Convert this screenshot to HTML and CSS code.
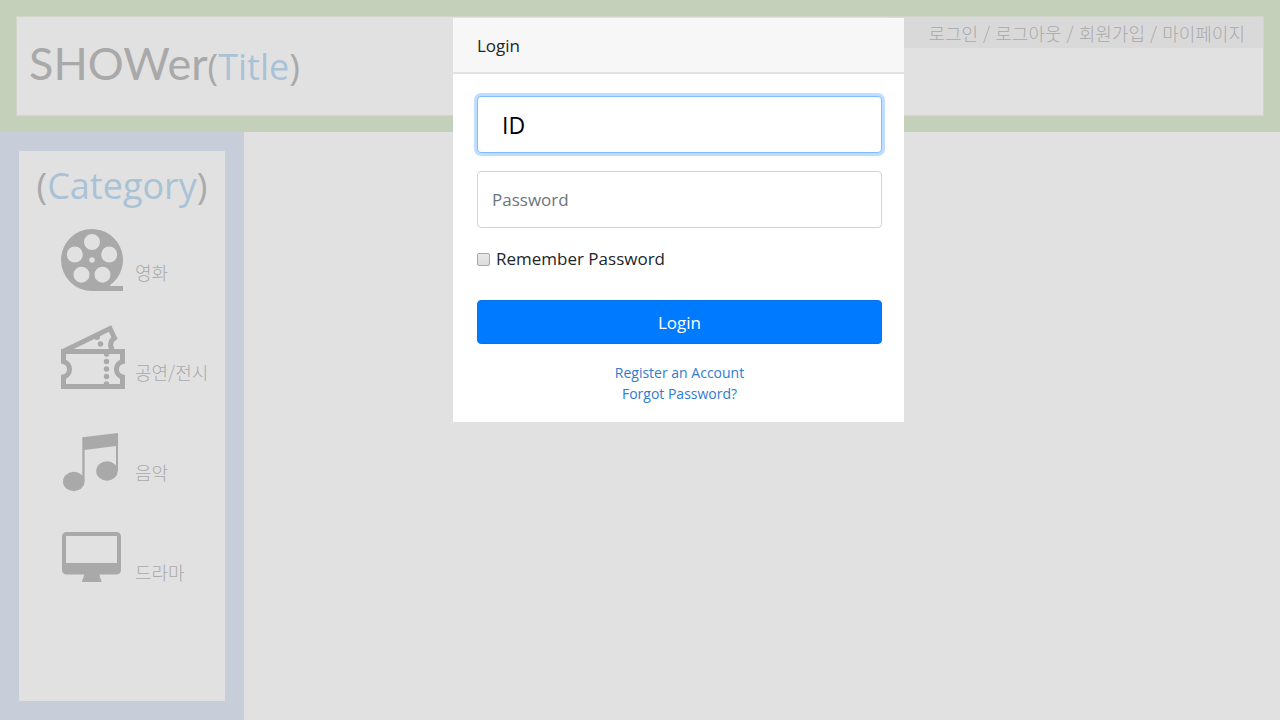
FILE: index.html
```html
<!DOCTYPE html>
<html lang="ko">
<head>
<meta charset="utf-8">
<meta name="viewport" content="width=device-width, initial-scale=1">
<title>SHOWer</title>
<link rel="stylesheet" href="styles.css">
</head>
<body>
<div class="page">
  <header class="header">
    <div class="header-box">
      <h1 class="brand">SHOWer<span class="brand-note">(<span class="accent">Title</span>)</span></h1>
      <nav class="user-nav">
        <a href="#">로그인</a> / <a href="#">로그아웃</a> / <a href="#">회원가입</a> / <a href="#">마이페이지</a>
      </nav>
    </div>
  </header>
  <div class="main">
    <aside class="sidebar">
      <div class="sidebar-box">
        <h2 class="sidebar-title">(<span class="accent">Category</span>)</h2>
        <ul class="categories">
          <li><a class="category" href="#">
            <svg class="category-icon" viewBox="0 0 64 68" aria-hidden="true">
              <path fill="currentColor" fill-rule="evenodd" d="M31 4a31 31 0 0 1 18 56.200L49 61H62V66H31a31 31 0 0 1 0-62ZM31 9a8 8 0 1 0 0 16a8 8 0 1 0 0-16ZM13.800 21.500a8 8 0 1 0 0 16a8 8 0 1 0 0-16ZM48.200 21.500a8 8 0 1 0 0 16a8 8 0 1 0 0-16ZM20.500 41.700a8 8 0 1 0 0 16a8 8 0 1 0 0-16ZM41.500 41.700a8 8 0 1 0 0 16a8 8 0 1 0 0-16ZM31 32.200a2.800 2.800 0 1 0 0 5.600a2.800 2.800 0 1 0 0-5.600Z"/>
            </svg>
            <span class="category-name">영화</span></a></li>
          <li><a class="category" href="#">
            <svg class="category-icon" viewBox="0 0 64 68" aria-hidden="true">
              <path fill="none" stroke="currentColor" stroke-width="5" d="M2.500 26.500H61.500V36.500a8 8 0 0 0 0 15.500V61.500H2.500V52a8 8 0 0 0 0-15.500Z"/>
              <path fill="none" stroke="currentColor" stroke-width="5" d="M2 26.500L49 3.500L53.500 13a8 8 0 0 0-2 12"/>
              <g fill="currentColor"><circle cx="36" cy="12" r="3"/><circle cx="39.500" cy="19" r="2.700"/><circle cx="45.500" cy="29" r="2.700"/><circle cx="45.500" cy="36.500" r="2.700"/><circle cx="45.500" cy="44" r="2.700"/><circle cx="45.500" cy="51.500" r="2.700"/><circle cx="45.500" cy="59" r="2.700"/></g>
            </svg>
            <span class="category-name">공연/전시</span></a></li>
          <li><a class="category" href="#">
            <svg class="category-icon" viewBox="0 0 64 68" aria-hidden="true">
              <g fill="currentColor"><ellipse cx="12.800" cy="56.500" rx="10.800" ry="9.700"/><ellipse cx="46" cy="46" rx="10.800" ry="9.700"/><path d="M21.300 12.300L57 8V46H55V21L23.600 25V56.500H21.300Z"/></g>
            </svg>
            <span class="category-name">음악</span></a></li>
          <li><a class="category" href="#">
            <svg class="category-icon" viewBox="0 0 64 68" aria-hidden="true">
              <path fill="currentColor" fill-rule="evenodd" d="M5.500 7H55.500a4.500 4.500 0 0 1 4.500 4.500V45a4.500 4.500 0 0 1-4.500 4.500H38.500C38.500 53 40.500 54 40.500 57H21C21 54 23 53 23 49.500H5.500A4.500 4.500 0 0 1 1 45V11.500A4.500 4.500 0 0 1 5.500 7ZM5 11V38H56V11Z"/>
            </svg>
            <span class="category-name">드라마</span></a></li>
        </ul>
      </div>
    </aside>
    <main class="content"></main>
  </div>
</div>

<div class="modal" role="dialog" aria-labelledby="login-title">
  <h2 class="modal-header" id="login-title">Login</h2>
  <form class="modal-body">
    <input class="field field-active" type="text" value="ID" aria-label="ID">
    <input class="field" type="password" placeholder="Password" aria-label="Password">
    <label class="remember"><input class="remember-box" type="checkbox">Remember Password</label>
    <button class="submit" type="button">Login</button>
    <div class="links">
      <a href="#">Register an Account</a>
      <a href="#">Forgot Password?</a>
    </div>
  </form>
</div>
</body>
</html>
```
FILE: styles.css
```css
* { box-sizing: border-box; }

body {
  margin: 0;
  background: #e1e1e1;
  color: #a9a9a9;
  font-family: "Open Sans", "Noto Sans CJK KR", sans-serif;
}

a { color: inherit; text-decoration: none; }

.page {
  display: flex;
  flex-direction: column;
  min-height: 100vh;
}

.header {
  padding: 16px;
  background: #c4d0ba;
}

.header-box {
  display: flex;
  justify-content: space-between;
  align-items: flex-start;
  min-height: 100px;
  border: 1px solid #d0d7ca;
  background: #e1e1e1;
}

.brand {
  margin: 0;
  padding: 16px 12px;
  font-family: Lato, sans-serif;
  font-size: 45px;
  font-weight: 400;
  line-height: 60px;
}

.brand-note {
  font-family: "Open Sans", sans-serif;
  font-size: 36px;
}

.accent { color: #a9c2d6; }

.user-nav {
  width: 375px;
  padding: 2px 18px 0;
  background: #d9d9d9;
  font-family: "Noto Sans CJK KR", sans-serif;
  font-size: 18px;
  font-weight: 300;
  line-height: 29px;
  text-align: right;
  white-space: nowrap;
}

.main {
  display: flex;
  flex: 1;
}

.sidebar {
  display: flex;
  width: 244px;
  padding: 19px;
  background: #c8cdda;
}

.sidebar-box {
  flex: 1;
  background: #e1e1e1;
}

.sidebar-title {
  margin: 0;
  padding-top: 10px;
  font-size: 36px;
  font-weight: 400;
  line-height: 50px;
  text-align: center;
}

.categories {
  display: flex;
  flex-direction: column;
  gap: 32px;
  margin: 0;
  padding: 14px 0 0 42px;
  list-style: none;
}

.category {
  display: flex;
  align-items: flex-end;
  gap: 10px;
}

.category-icon {
  display: block;
  width: 64px;
  height: 68px;
}

.category-name {
  padding-bottom: 8px;
  font-family: "Noto Sans CJK KR", sans-serif;
  font-size: 18px;
  font-weight: 300;
  line-height: 26px;
  white-space: nowrap;
}

.content { flex: 1; }

.modal {
  position: absolute;
  top: 18px;
  left: calc(50% - 187px);
  width: 451px;
  background: #fff;
  color: #212529;
}

.modal-header {
  margin: 0;
  padding: 14px 24px 12px;
  border-bottom: 2px solid #e2e2e2;
  background: #f7f7f7;
  font-size: 17px;
  font-weight: 400;
  line-height: 28px;
}

.modal-body {
  display: flex;
  flex-direction: column;
  padding: 22px 22px 18px 24px;
}

.field {
  width: 100%;
  height: 57px;
  margin: 0 0 18px;
  padding: 0 14px;
  border: 1px solid #ced4da;
  border-radius: 4px;
  outline: 0;
  background: #fff;
  color: #000;
  font-family: inherit;
  font-size: 17px;
}

.field::placeholder {
  color: #6c757d;
  opacity: 1;
}

.field-active {
  padding: 0 24px;
  border-color: #80bdff;
  box-shadow: 0 0 0 3px #bfdeff;
  font-size: 23px;
}

.remember {
  display: flex;
  align-items: center;
  gap: 6px;
  font-size: 17px;
  line-height: 26px;
}

.remember-box {
  width: 13px;
  height: 13px;
  margin: 0;
  border: 1px solid #a8a8a8;
  border-radius: 2px;
  appearance: none;
  background: linear-gradient(#e9e9e9, #dcdcdc);
}

.submit {
  height: 44px;
  margin: 28px 0 18px;
  border: 1px solid #0a74e6;
  border-radius: 4px;
  background: #007bff;
  color: #fff;
  font-family: inherit;
  font-size: 17px;
}

.links {
  display: flex;
  flex-direction: column;
  align-items: center;
  color: #2f7bd0;
  font-size: 14px;
  line-height: 21px;
}
```
